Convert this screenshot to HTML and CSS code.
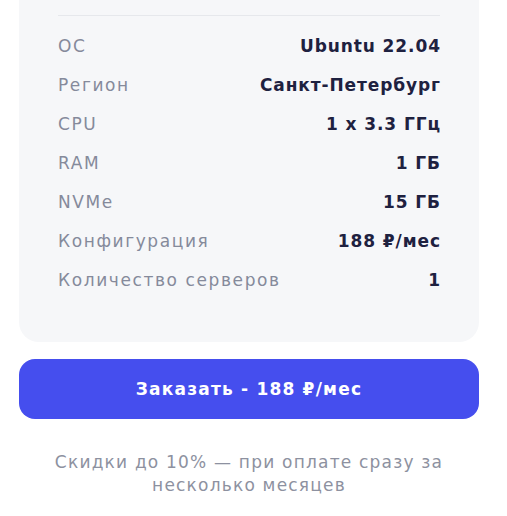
FILE: index.html
```html
<!DOCTYPE html>
<html lang="ru">
<head>
<meta charset="utf-8">
<link rel="stylesheet" href="styles.css">
</head>
<body>
<div class="wrap">
  <div class="card">
    <div class="divider"></div>
    <div class="rows">
      <div class="row"><span class="label">ОС</span><span class="value">Ubuntu 22.04</span></div>
      <div class="row"><span class="label">Регион</span><span class="value">Санкт-Петербург</span></div>
      <div class="row"><span class="label">CPU</span><span class="value">1 x 3.3 ГГц</span></div>
      <div class="row"><span class="label">RAM</span><span class="value">1 ГБ</span></div>
      <div class="row"><span class="label">NVMe</span><span class="value">15 ГБ</span></div>
      <div class="row"><span class="label">Конфигурация</span><span class="value">188 ₽/мес</span></div>
      <div class="row"><span class="label">Количество серверов</span><span class="value">1</span></div>
    </div>
  </div>
  <button class="order">Заказать - 188 ₽/мес</button>
  <p class="note">Скидки до 10% — при оплате сразу за<br>несколько месяцев</p>
</div>
</body>
</html>
```

FILE: styles.css
```css
html, body {
  margin: 0;
  padding: 0;
  background: #ffffff;
  overflow: hidden;
}
body {
  font-family: "DejaVu Sans", "Noto Sans", sans-serif;
}
.wrap {
  width: 460px;
  margin-left: 19px;
  margin-top: -40px;
}
.card {
  background: #f6f7f9;
  border-radius: 20px;
  padding: 55px 39px 43px;
}
.divider {
  height: 1px;
  background: #e6e8ec;
}
.rows {
  margin-top: 10px;
}
.row {
  display: flex;
  justify-content: space-between;
  align-items: center;
  height: 39px;
  font-size: 17px;
}
.label {
  color: #858a9b;
  letter-spacing: 1.6px;
}
.value {
  color: #1e2140;
  font-weight: 700;
  letter-spacing: 0.9px;
  margin-right: -0.9px;
}
.order {
  display: block;
  width: 100%;
  height: 60px;
  margin-top: 17px;
  border: none;
  border-radius: 16px;
  background: #454eee;
  color: #ffffff;
  font-family: inherit;
  font-size: 17px;
  font-weight: 700;
  letter-spacing: 1.2px;
}
.note {
  margin: 32px 0 0;
  text-align: center;
  color: #8d91a0;
  font-size: 17px;
  line-height: 23px;
  letter-spacing: 1.2px;
}
```
